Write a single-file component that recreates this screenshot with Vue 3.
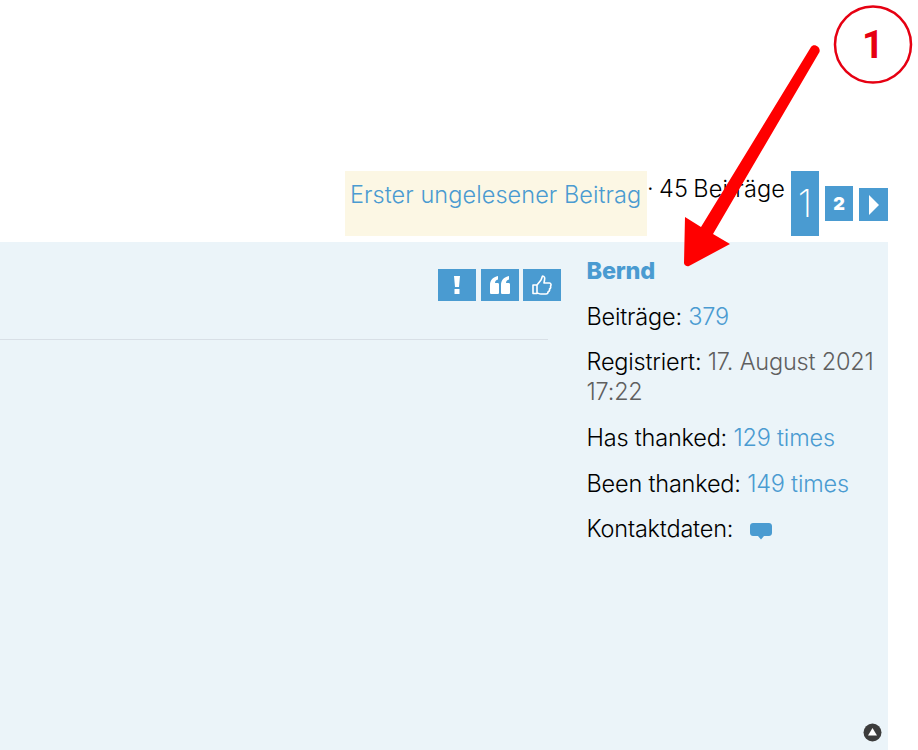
<template>
  <div class="page">
    <div class="topbar">
      <a class="unread">Erster ungelesener Beitrag</a>
      <span class="count">· 45 Beiträge</span>
      <div class="pages">
        <span class="page-current">1</span>
        <a class="page-num">2</a>
        <a class="page-next">
          <svg width="12" height="20" viewBox="0 0 12 20"><path d="M1 0 L11 10 L1 20 Z" fill="#fff" /></svg>
        </a>
      </div>
    </div>

    <div class="post">
      <div class="post-body">
        <div class="post-buttons">
          <a class="btn">
            <svg width="8" height="18" viewBox="0 0 8 18"><path d="M1 0 H7 L6 11 H2 Z M1.500 13 H6.500 V18 H1.500 Z" fill="#fff" /></svg>
          </a>
          <a class="btn">
            <svg width="22" height="18" viewBox="0 0 22 18"><path d="M1 9 C1 4 4 1 9 0 V3.500 C7 4 6 5 6 7 H8.500 C9.500 7 10 7.500 10 8.500 V16.500 C10 17.500 9.500 18 8.500 18 H2.500 C1.500 18 1 17.500 1 16.500 Z M12 9 C12 4 15 1 20 0 V3.500 C18 4 17 5 17 7 H19.500 C20.500 7 21 7.500 21 8.500 V16.500 C21 17.500 20.500 18 19.500 18 H13.500 C12.500 18 12 17.500 12 16.500 Z" fill="#fff" /></svg>
          </a>
          <a class="btn">
            <svg width="20" height="20" viewBox="0 0 20 20"><path d="M1 10 H5 V18.500 H1 Z M5 10 L9 5 C10 3 10 2 10.500 1 C12.500 1 13 3 12.500 5 L12 8 H17.500 C19 8 19.500 10 18.500 11 C19 12.500 18.500 13.500 17.500 14 C18 15.500 17 16.500 16 17 C16 18.500 15 19 14 19 H9 C7 19 6 18 5 18" fill="none" stroke="#fff" stroke-width="1.600" stroke-linejoin="round" /></svg>
          </a>
        </div>
        <div class="divider"></div>
      </div>

      <div class="profile">
        <div class="author">Bernd</div>
        <div class="row">Beiträge: <a>379</a></div>
        <div class="row">Registriert: <span class="muted">17. August 2021 17:22</span></div>
        <div class="row">Has thanked: <a>129 times</a></div>
        <div class="row">Been thanked: <a>149 times</a></div>
        <div class="row">
          Kontaktdaten:
          <svg class="contact" width="22" height="17" viewBox="0 0 22 17"><path d="M3 0 H19 C20.500 0 22 1 22 3 V10 C22 12 20.500 13 19 13 H14 L11 16.500 L8 13 H3 C1.500 13 0 12 0 10 V3 C0 1 1.500 0 3 0 Z" fill="#4a9bd1" /></svg>
        </div>
      </div>

      <a class="to-top">
        <svg width="19" height="19" viewBox="0 0 19 19"><circle cx="9.500" cy="9.500" r="9" fill="#3c3c3c" /><path d="M9.500 5 L14 12.500 H5 Z" fill="#fff" /></svg>
      </a>
    </div>

    <!-- Markierung aus dem Screenshot -->
    <svg class="annotation" width="918" height="750" viewBox="0 0 918 750">
      <circle cx="873" cy="44.500" r="38" fill="none" stroke="#e60012" stroke-width="2.500" />
      <text x="873" y="58" text-anchor="middle" class="mark">1</text>
      <path d="M811 47 C814 43 821 47 819.500 52 L713 234 L730 244 L689 266 C687 267 684 265 684 263 L685 217 L701 227 Z" fill="#ff0000" />
    </svg>
  </div>
</template>

<script setup>
</script>

<style>
html,
body {
  margin: 0;
  background: #fff;
}
</style>

<style scoped>
.page {
  position: relative;
  width: 918px;
  height: 750px;
  overflow: hidden;
  box-sizing: border-box;
  padding: 171px 30px 0 0;
  font-family: "Inter", "Liberation Sans", sans-serif;
  font-weight: 300;
  font-size: 23.500px;
  color: #000;
}

a {
  color: #4a9bd1;
  text-decoration: none;
}

.topbar {
  display: flex;
  justify-content: flex-end;
  align-items: flex-start;
  height: 65px;
}

.unread {
  box-sizing: border-box;
  height: 65px;
  width: 302px;
  padding: 9px 5px 0;
  background: #fcf7e4;
  white-space: nowrap;
  overflow: hidden;
  letter-spacing: 0.06px;
}

.count {
  width: 137px;
  margin: 3px 7px 0 0;
  white-space: nowrap;
  letter-spacing: 0.15px;
  word-spacing: -1.500px;
}

.pages {
  display: flex;
  align-items: flex-start;
  gap: 6px;
}

.page-current {
  width: 28px;
  height: 65px;
  background: #4a9bd1;
  color: #fff;
  font-size: 38px;
  font-weight: 200;
  text-align: center;
  line-height: 65px;
}

.page-num {
  width: 28px;
  height: 35px;
  margin-top: 15px;
  background: #4a9bd1;
  color: #fff;
  font-size: 18px;
  font-weight: 900;
  text-align: center;
  line-height: 35px;
}

.page-next {
  width: 29px;
  height: 33px;
  margin-top: 17px;
  background: #4a9bd1;
  display: flex;
  align-items: center;
  justify-content: center;
}

.post {
  position: relative;
  display: flex;
  height: 508px;
  margin-top: 6px;
  background: #ebf4f9;
}

.post-body {
  width: 548px;
  padding-top: 27px;
}

.post-buttons {
  display: flex;
  justify-content: flex-end;
  gap: 4.500px;
  margin-right: -13px;
}

.btn {
  width: 38px;
  height: 32px;
  background: #4a9bd1;
  display: flex;
  align-items: center;
  justify-content: center;
}

.divider {
  height: 1px;
  margin-top: 38px;
  background: #d8dfe6;
}

.profile {
  box-sizing: border-box;
  width: 340px;
  padding: 14px 6px 0 38.500px;
  line-height: 30.300px;
  letter-spacing: -0.2px;
}

.author {
  color: #4a9bd1;
  font-weight: 800;
  margin-bottom: 15.300px;
}

.row {
  margin-bottom: 15.300px;
}

.muted {
  color: #5f5f5f;
}

.contact {
  margin-left: 10px;
  vertical-align: -3px;
}

.to-top {
  position: absolute;
  right: 6px;
  bottom: 8px;
  display: flex;
}

.annotation {
  position: absolute;
  top: 0;
  left: 0;
  pointer-events: none;
}

.mark {
  font-family: "Roboto", sans-serif;
  font-weight: 700;
  font-size: 38px;
  fill: #e60012;
}
</style>
